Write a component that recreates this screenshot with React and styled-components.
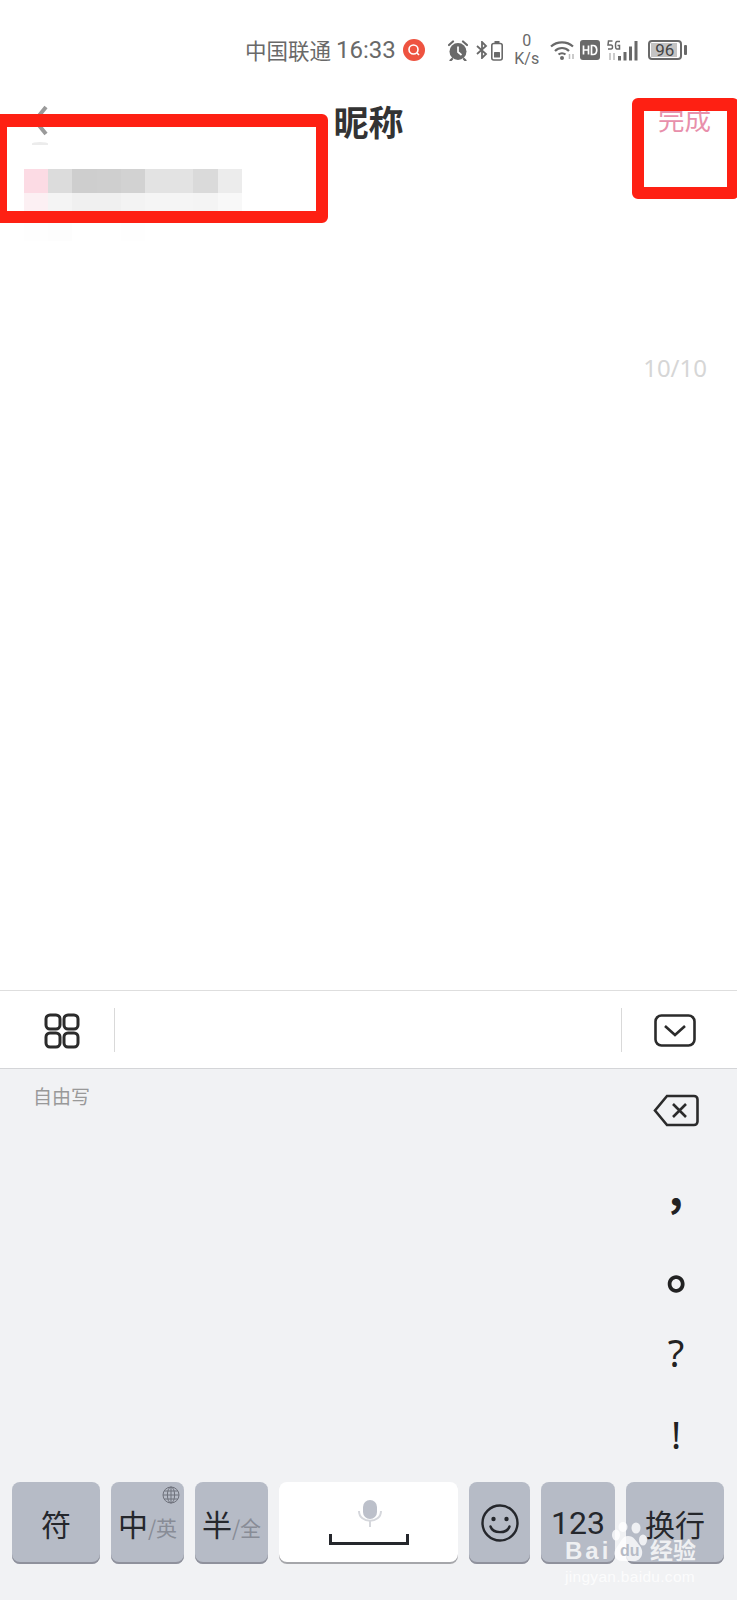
import React from 'react'
import styled, {createGlobalStyle} from 'styled-components'

const GlobalStyle = createGlobalStyle`
    html, body {
        margin: 0;
        padding: 0;
        background: #fff;
    }
    body {
        font-family: 'Noto Sans', 'Noto Sans CJK SC', sans-serif;
    }
`

const Page = styled.div`
    position: relative;
    display: flex;
    flex-direction: column;
    width: 737px;
    height: 1600px;
    overflow: hidden;
    background: #fff;
`

const StatusBar = styled.div`
    display: flex;
    align-items: center;
    height: 68px;
    padding: 16px 0 0 245px;
    color: #696969;
    white-space: nowrap;
`
const Carrier = styled.span`
    font-family: 'Noto Sans CJK SC', sans-serif;
    font-size: 21.5px;
    line-height: 1;
`
const Clock = styled.span`
    margin-left: 5px;
    font-family: Roboto, sans-serif;
    font-size: 24px;
    line-height: 1;
`
const StatusIcon = styled.svg`
    flex: none;
    margin-left: ${p => p.$ml || 0}px;
    display: block;
`
const Speed = styled.div`
    display: flex;
    flex-direction: column;
    align-items: center;
    width: 24px;
    margin-left: 12px;
    font-family: Roboto, sans-serif;
    font-size: 16px;
    line-height: 18px;
    color: #696969;
`
const BatteryPill = styled.div`
    position: relative;
    box-sizing: border-box;
    display: flex;
    align-items: center;
    justify-content: center;
    width: 34px;
    height: 20px;
    margin-left: 9px;
    border: 2px solid #696969;
    border-radius: 4px;
    font-family: Roboto, sans-serif;
    font-size: 17px;
    line-height: 1;
    color: #444;
    background: linear-gradient(#c4c4c4, #c4c4c4) no-repeat 1px 1px / 26px 14px;
    &::after {
        content: '';
        position: absolute;
        right: -7px;
        top: 3px;
        width: 3px;
        height: 10px;
        border-radius: 1px;
        background: #696969;
    }
`

const NavBar = styled.div`
    position: relative;
    display: flex;
    align-items: center;
    justify-content: center;
    height: 72px;
`
const BackButton = styled.svg`
    position: absolute;
    left: 31px;
    top: 20px;
`
const BackShadow = styled.div`
    position: absolute;
    left: 32px;
    top: 58px;
    width: 16px;
    height: 3px;
    border-radius: 50% 50% 0 0;
    background: #ececec;
`
const Title = styled.h1`
    margin: 0;
    font-family: 'Noto Sans CJK SC', sans-serif;
    font-size: 35px;
    line-height: 1;
    font-weight: 700;
    color: #333;
`
const DoneButton = styled.span`
    position: absolute;
    right: 26px;
    top: 22px;
    font-family: 'Noto Sans CJK SC', sans-serif;
    font-size: 26.5px;
    line-height: 1;
    color: #e88fab;
`

const Content = styled.div`
    flex: 1;
    display: flex;
    flex-direction: column;
    padding-top: 13px;
`
const MosaicRow = styled.div`
    display: flex;
    height: 24px;
    padding-left: 24px;
`
const MosaicCell = styled.div`
    width: 24.2px;
    height: 100%;
`
const Counter = styled.div`
    align-self: flex-end;
    margin: 113px 30px 0 0;
    font-size: 24px;
    line-height: 28px;
    color: #d6d6d6;
`

const RedFrame = styled.div`
    position: absolute;
    box-sizing: border-box;
    left: ${p => p.$x}px;
    top: ${p => p.$y}px;
    width: ${p => p.$w}px;
    height: ${p => p.$h}px;
    border: 12px solid #fe2013;
    border-top-width: 13px;
    border-radius: 6px;
`

const ToolBar = styled.div`
    box-sizing: border-box;
    display: flex;
    align-items: center;
    height: 79px;
    border-top: 1px solid #dedede;
    border-bottom: 1px solid #d4d5d8;
    background: #fff;
`
const ToolSlot = styled.div`
    box-sizing: border-box;
    display: flex;
    align-items: center;
    width: ${p => p.$w}px;
    padding-left: ${p => p.$pad}px;
    padding-top: 2px;
    height: 100%;
`
const ToolSpacer = styled.div`
    flex: 1;
    height: 44px;
    border-left: 1px solid #d9d9d9;
    border-right: 1px solid #d9d9d9;
`

const Keyboard = styled.div`
    display: flex;
    flex-direction: column;
    height: 531px;
    background: #f1f2f4;
`
const KeyboardBody = styled.div`
    flex: 1;
    min-height: 0;
    display: flex;
    justify-content: space-between;
`
const HintText = styled.div`
    padding: 15px 0 0 33px;
    font-family: 'Noto Sans CJK SC', sans-serif;
    font-size: 19px;
    line-height: 24px;
    color: #999;
`
const SideColumn = styled.div`
    display: flex;
    flex-direction: column;
    align-items: center;
    width: 122px;
    padding-top: 25px;
`
const PunctSlot = styled.div`
    display: flex;
    align-items: center;
    justify-content: center;
    width: 100%;
    height: ${p => p.$h}px;
    font-size: 38px;
    line-height: 1;
    color: #222;
`
const HeavyPunct = styled(PunctSlot)`
    font-family: 'Noto Sans CJK TC', sans-serif;
    font-size: ${p => p.$size}px;
    font-weight: 700;
`
const KeyRow = styled.div`
    display: flex;
    gap: 11px;
    padding: 0 12px 36px;
`
const Key = styled.div`
    position: relative;
    box-sizing: border-box;
    display: flex;
    align-items: center;
    justify-content: center;
    flex: none;
    width: ${p => p.$w}px;
    height: 82px;
    border-radius: 8px;
    background: ${p => (p.$light ? '#fff' : '#b6bbc6')};
    box-shadow: inset 0 -2px 0 ${p => (p.$light ? '#a5a6aa' : '#8f919c')};
    font-family: 'Noto Sans CJK SC', sans-serif;
    font-size: 30px;
    line-height: 1;
    color: #25272c;
`
const KeyDigits = styled.span`
    font-family: Roboto, sans-serif;
    font-size: 32px;
`
const SubLabel = styled.span`
    font-size: 21px;
    color: #888c96;
    margin-top: 8px;
    white-space: nowrap;
`
const GlobeMark = styled.svg`
    position: absolute;
    right: 4px;
    top: 4px;
`
const SpaceBar = styled.svg`
    display: block;
`

const Watermark = styled.div`
    position: absolute;
    left: 565px;
    top: 1518px;
    width: 136px;
    color: rgba(255, 255, 255, 0.78);
`
const WatermarkTop = styled.div`
    position: relative;
    display: flex;
    align-items: flex-end;
    height: 43px;
    font-family: 'Liberation Sans', sans-serif;
    font-weight: 700;
`
const WatermarkBai = styled.span`
    font-size: 24px;
    line-height: 20px;
    letter-spacing: 3px;
`
const WatermarkDu = styled.span`
    position: absolute;
    left: 55px;
    bottom: 2px;
    font-size: 16px;
    line-height: 1;
    color: #b6bbc6;
`
const WatermarkCn = styled.span`
    position: absolute;
    left: 85px;
    bottom: 0;
    font-family: 'Noto Sans CJK SC', sans-serif;
    font-size: 23px;
    line-height: 23px;
`
const WatermarkUrl = styled.div`
    margin-top: 8px;
    font-family: 'Liberation Sans', sans-serif;
    font-size: 15.5px;
    line-height: 16px;
    white-space: nowrap;
    letter-spacing: 0.3px;
    color: rgba(255, 255, 255, 0.8);
`
const Paw = styled.svg`
    position: absolute;
    left: 45px;
    top: 4px;
`

const mosaic = [
    ['#fcdbe4', '#dcdcdc', '#cecece', '#cfcfcf', '#d2d2d2', '#e3e3e3', '#e3e3e3', '#dadada', '#ececec'],
    ['#fcf0f3', '#f4f4f4', '#f0f0f0', '#f0f0f0', '#f3f3f3', '#f5f5f5', '#f5f5f5', '#f4f4f4', '#f8f8f8'],
    ['#fefefe', '#fdfdfd', '#fff', '#fff', '#fefefe', '#fff', '#fff', '#fff', '#fff']
]

const AlarmIcon = () => (
    <StatusIcon $ml={23} width="20" height="21" viewBox="0 0 20 21">
        <circle cx="10" cy="11.5" r="8.5" fill="#696969"/>
        <path d="M1 5 L5 1.5 M19 5 L15 1.5 M4 19 L2.5 20.5 M16 19 L17.5 20.5" stroke="#696969" strokeWidth="2.2" strokeLinecap="round"/>
        <path d="M10 6.5 V12 L13.5 15" stroke="#fff" strokeWidth="1.7" fill="none"/>
    </StatusIcon>
)

const BluetoothIcon = () => (
    <StatusIcon $ml={8} width="12" height="18" viewBox="0 0 12 18">
        <path d="M1 5 L10 13 L6 17 V1 L10 5 L1 13" stroke="#696969" strokeWidth="1.8" fill="none"/>
    </StatusIcon>
)

const SmallBattery = () => (
    <StatusIcon $ml={3} width="12" height="21" viewBox="0 0 12 21">
        <rect x="0.8" y="3.5" width="10.4" height="16.5" rx="2" stroke="#696969" strokeWidth="1.6" fill="none"/>
        <rect x="3.5" y="1" width="5" height="2" fill="#696969"/>
        <rect x="3" y="12" width="6" height="5.5" rx="0.5" fill="#696969"/>
    </StatusIcon>
)

const WifiIcon = () => (
    <StatusIcon $ml={11} width="25" height="20" viewBox="0 0 25 20">
        <path d="M1 6.5 C7 1 17 1 23 6.5 M5 11 C9 7 15 7 19 11 M8.5 14.5 C10.5 12.8 13.5 12.8 15.5 14.5" stroke="#696969" strokeWidth="2.2" fill="none"/>
        <circle cx="12" cy="18" r="2" fill="#696969"/>
        <path d="M19.5 14 V19 M23 14 V19" stroke="#bbb" strokeWidth="1.5"/>
    </StatusIcon>
)

const HdIcon = () => (
    <StatusIcon $ml={5} width="20" height="20" viewBox="0 0 20 20">
        <rect width="20" height="20" rx="3" fill="#696969"/>
        <path d="M3.5 5.5 V14.5 M8.5 5.5 V14.5 M3.5 10 H8.5 M11.5 5.5 V14.5 H13 C18 14.5 18 5.5 13 5.5 Z" stroke="#fff" strokeWidth="1.7" fill="none"/>
    </StatusIcon>
)

const SignalIcon = () => (
    <StatusIcon $ml={7} width="32" height="21" viewBox="0 0 32 21">
        <path d="M5.5 1 H1.5 L1 5 H4 C6 5 6 9 4 9 H1 M13 1.5 H10 C8 1.5 8 9 10 9 H12.5 V5.5 H10.5" stroke="#696969" strokeWidth="1.5" fill="none"/>
        <path d="M3 13 V20 M7 13 V20" stroke="#bbb" strokeWidth="1.5"/>
        <rect x="11" y="16" width="3" height="4.5" fill="#696969"/>
        <rect x="16.5" y="12" width="3" height="8.5" fill="#696969"/>
        <rect x="22" y="6.5" width="3" height="14" fill="#696969"/>
        <rect x="27.5" y="1" width="3" height="19.5" fill="#696969"/>
    </StatusIcon>
)

const GlobeIcon = () => (
    <GlobeMark width="18" height="18" viewBox="0 0 18 18" fill="none" stroke="#6f727c" strokeWidth="1">
        <circle cx="9" cy="9" r="8"/>
        <ellipse cx="9" cy="9" rx="3.6" ry="8"/>
        <path d="M9 1 V17 M1 9 H17 M2.2 5 H15.8 M2.2 13 H15.8"/>
    </GlobeMark>
)

const SmileIcon = () => (
    <svg width="38" height="38" viewBox="0 0 38 38" fill="none">
        <circle cx="19" cy="19" r="17.5" stroke="#25272c" strokeWidth="2.4"/>
        <circle cx="12.5" cy="15" r="2.2" fill="#25272c"/>
        <circle cx="25.5" cy="15" r="2.2" fill="#25272c"/>
        <path d="M9.5 22.5 C12 30 26 30 28.5 22.5" stroke="#25272c" strokeWidth="2.4" strokeLinecap="round"/>
    </svg>
)

const SpaceKeyArt = () => (
    <SpaceBar width="80" height="64" viewBox="0 0 80 64" fill="none">
        <rect x="34" y="9" width="14" height="19" rx="7" fill="#bcc0ca"/>
        <path d="M30 20 C30 33 52 33 52 20" stroke="#d5d7dc" strokeWidth="2"/>
        <path d="M41 29 V36" stroke="#d5d7dc" strokeWidth="2"/>
        <path d="M1.5 43 V52.5 H78.5 V43" stroke="#25272c" strokeWidth="3"/>
    </SpaceBar>
)

const App = () => {
    return (
        <Page>
            <GlobalStyle/>

            <StatusBar>
                <Carrier>中国联通</Carrier>
                <Clock>16:33</Clock>
                <StatusIcon $ml={7} width="22" height="22" viewBox="0 0 22 22">
                    <circle cx="11" cy="11" r="11" fill="#ee5340"/>
                    <circle cx="10.5" cy="10.5" r="4.5" fill="none" stroke="#fff" strokeWidth="1.6"/>
                    <path d="M14 14 L16 16" stroke="#fff" strokeWidth="1.6"/>
                </StatusIcon>
                <AlarmIcon/>
                <BluetoothIcon/>
                <SmallBattery/>
                <Speed>
                    <span>0</span>
                    <span>K/s</span>
                </Speed>
                <WifiIcon/>
                <HdIcon/>
                <SignalIcon/>
                <BatteryPill>96</BatteryPill>
            </StatusBar>

            <NavBar>
                <BackButton width="18" height="34" viewBox="0 0 18 34" fill="none">
                    <path d="M15 3 L4 16.5 L15 30" stroke="#9a9a9a" strokeWidth="4"/>
                </BackButton>
                <BackShadow/>
                <Title>昵称</Title>
                <DoneButton>完成</DoneButton>
            </NavBar>

            <Content>
                {mosaic.map((row, i) => (
                    <MosaicRow key={i}>
                        {row.map((color, j) => (
                            <MosaicCell key={j} style={{background: color}}/>
                        ))}
                    </MosaicRow>
                ))}
                <Counter>10/10</Counter>
            </Content>

            <ToolBar>
                <ToolSlot $w={114} $pad={44}>
                    <svg width="36" height="36" viewBox="0 0 36 36" fill="none" stroke="#2b2b2b" strokeWidth="3">
                        <rect x="2" y="2" width="14" height="14" rx="4"/>
                        <rect x="20" y="2" width="14" height="14" rx="4"/>
                        <rect x="2" y="20" width="14" height="14" rx="4"/>
                        <rect x="20" y="20" width="14" height="14" rx="4"/>
                    </svg>
                </ToolSlot>
                <ToolSpacer/>
                <ToolSlot $w={115} $pad={32}>
                    <svg width="42" height="33" viewBox="0 0 42 33" fill="none" stroke="#2b2b2b" strokeWidth="2.6">
                        <rect x="1.5" y="1.5" width="39" height="30" rx="6"/>
                        <path d="M11 12 L21 21 L31 12"/>
                    </svg>
                </ToolSlot>
            </ToolBar>

            <Keyboard>
                <KeyboardBody>
                    <HintText>自由写</HintText>
                    <SideColumn>
                        <svg width="46" height="33" viewBox="0 0 46 33" fill="none" stroke="#2b2b2b" strokeWidth="2.6">
                            <path d="M14 2 H41 C43 2 44.5 3.5 44.5 5.5 V27.5 C44.5 29.5 43 31 41 31 H14 L2 16.5 Z"/>
                            <path d="M20 10 L33 23 M33 10 L20 23"/>
                        </svg>
                        <HeavyPunct $h={120} $size={44}>,</HeavyPunct>
                        <HeavyPunct $h={70} $size={52}>。</HeavyPunct>
                        <PunctSlot $h={70}>?</PunctSlot>
                        <PunctSlot $h={94}>!</PunctSlot>
                    </SideColumn>
                </KeyboardBody>
                <KeyRow>
                    <Key $w={88}>符</Key>
                    <Key $w={73}>
                        中<SubLabel>/英</SubLabel>
                        <GlobeIcon/>
                    </Key>
                    <Key $w={73}>
                        半<SubLabel>/全</SubLabel>
                    </Key>
                    <Key $w={179} $light>
                        <SpaceKeyArt/>
                    </Key>
                    <Key $w={61}>
                        <SmileIcon/>
                    </Key>
                    <Key $w={74}>
                        <KeyDigits>123</KeyDigits>
                    </Key>
                    <Key $w={98}>换行</Key>
                </KeyRow>
            </Keyboard>

            <RedFrame $x={-5} $y={114} $w={333} $h={109}/>
            <RedFrame $x={632} $y={98} $w={107} $h={101}/>

            <Watermark>
                <WatermarkTop>
                    <WatermarkBai>Bai</WatermarkBai>
                    <Paw width="38" height="40" viewBox="0 0 38 40" fill="rgba(255,255,255,0.78)">
                        <ellipse cx="6" cy="13" rx="4" ry="5.5"/>
                        <ellipse cx="13" cy="5" rx="4.5" ry="5"/>
                        <ellipse cx="26" cy="6" rx="4.5" ry="5.5"/>
                        <ellipse cx="33" cy="18" rx="4" ry="5.5"/>
                        <path d="M18 14 C24 14 26 19 30 24 C35 31 31 39 24 39 H12 C5 39 2 31 7 25 C11 20 12 14 18 14 Z"/>
                    </Paw>
                    <WatermarkDu>du</WatermarkDu>
                    <WatermarkCn>经验</WatermarkCn>
                </WatermarkTop>
                <WatermarkUrl>jingyan.baidu.com</WatermarkUrl>
            </Watermark>
        </Page>
    )
}

export default App
